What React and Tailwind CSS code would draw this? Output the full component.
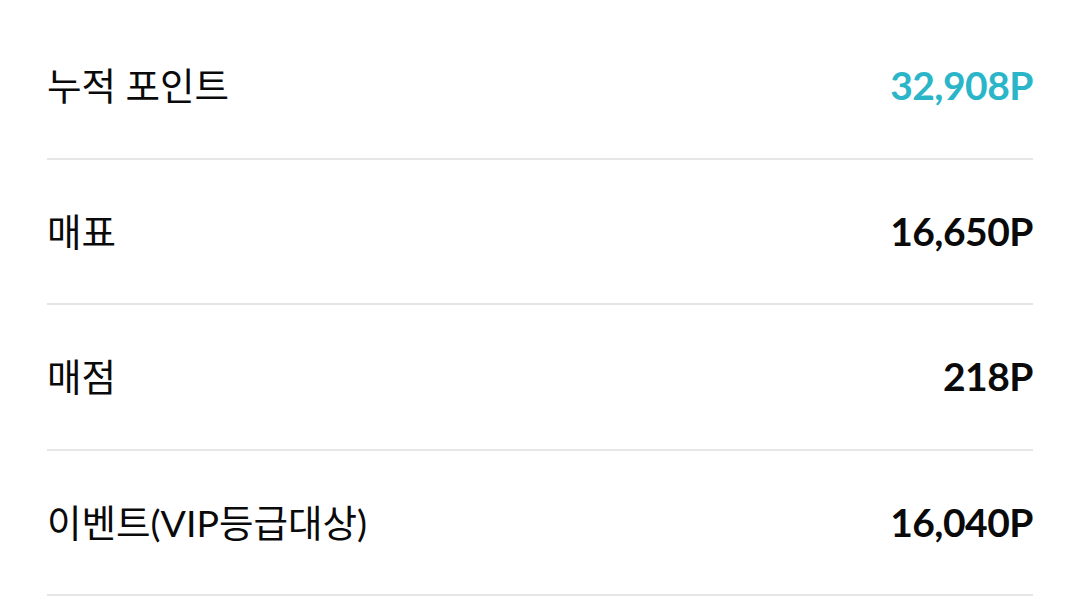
import React from "react";

const rows = [
  { label: "누적 포인트", value: "32,908P", accent: true },
  { label: "매표", value: "16,650P" },
  { label: "매점", value: "218P" },
  { label: "이벤트(VIP등급대상)", value: "16,040P" },
];

const App = () => {
  return (
    <div className="w-[1080px] h-[610px] bg-white overflow-hidden pt-[14px] px-[47px]">
      {rows.map((row) => (
        <div
          key={row.label}
          className="flex items-center justify-between h-[145.5px] border-b-2 border-[#e6e6e6]"
        >
          <span
            className="text-[37.5px] text-[#0a0a0a] leading-none"
            style={{ fontFamily: "Lato, 'Noto Sans CJK KR', sans-serif" }}
          >
            {row.label}
          </span>
          <span
            className={`text-[39px] font-bold leading-none tracking-[-0.5px] ${
              row.accent ? "text-[#2bb5c8]" : "text-[#0a0a0a]"
            }`}
            style={{ fontFamily: "Lato, sans-serif" }}
          >
            {row.value}
          </span>
        </div>
      ))}
    </div>
  );
};

export default App;
